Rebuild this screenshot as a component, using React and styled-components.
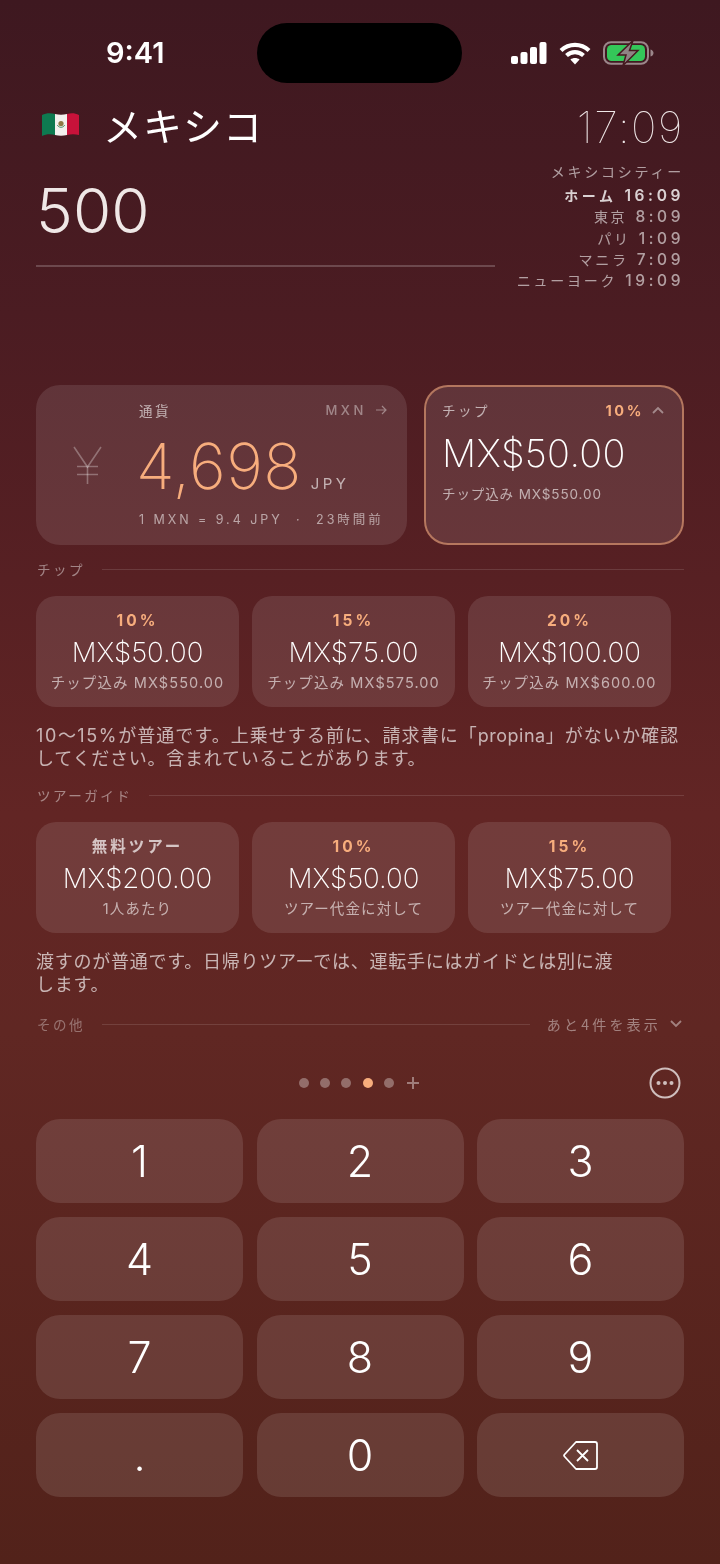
import styled, { createGlobalStyle } from "styled-components";

const GlobalStyle = createGlobalStyle`
  html {
    background: linear-gradient(180deg, #3e1820 0%, #4b1c22 20%, #572023 37%, #622524 52%, #602723 66%, #52221a 100%);
  }
  body {
    margin: 0;
    padding: 0;
  }
  * {
    box-sizing: border-box;
  }
`;

const FONT = `Inter, "Noto Sans CJK JP", sans-serif`;
const JP = `"Noto Sans CJK JP", Inter, sans-serif`;

const Screen = styled.div`
  width: 720px;
  height: 1564px;
  overflow: hidden;
  font-family: ${FONT};
  color: #fff;
  padding: 0 36px;
  will-change: opacity;
`;

const StatusBar = styled.div`
  height: 104px;
  margin: 0 -36px;
  padding: 23px 0 0 106px;
  display: flex;
  align-items: flex-start;
`;

const Clock = styled.div`
  font-size: 29px;
  font-weight: 600;
  line-height: 60px;
  width: 151px;
`;

const Island = styled.div`
  width: 205px;
  height: 60px;
  border-radius: 30px;
  background: #000;
`;

const StatusIcons = styled.div`
  height: 60px;
  margin-left: 49px;
  display: flex;
  align-items: center;
  gap: 12px;
`;

const Header = styled.div`
  display: flex;
  justify-content: space-between;
  height: 281px;
`;

const HeaderLeft = styled.div`
  width: 459px;
`;

const TitleRow = styled.div`
  display: flex;
  align-items: center;
  gap: 23px;
  height: 40px;
  padding-left: 5px;
`;

const Title = styled.h1`
  margin: 0;
  font-family: ${JP};
  font-size: 39px;
  font-weight: 400;
  line-height: 40px;
  letter-spacing: 1px;
`;

const Amount = styled.div`
  margin-top: 27px;
  height: 94px;
  font-size: 62px;
  font-weight: 280;
  line-height: 79px;
  letter-spacing: 0.1px;
  color: #efe7e6;
`;

const Rule = styled.div`
  height: 2px;
  background: rgba(255, 255, 255, 0.2);
`;

const HeaderRight = styled.div`
  text-align: right;
  padding-top: 3px;
`;

const BigTime = styled.div`
  font-size: 43px;
  font-weight: 100;
  line-height: 40px;
  color: #f0e8e8;
  letter-spacing: 1.6px;
`;

const Zones = styled.div`
  margin-top: 14px;
  font-family: ${JP};
  font-size: 14px;
  line-height: 21.2px;
  letter-spacing: 2.75px;
  color: rgba(255, 255, 255, 0.58);
`;

const Zone = styled.div`
  display: flex;
  justify-content: flex-end;
  gap: 8px;
  margin-top: ${(p) => (p.$home ? "3px" : "0")};
  font-weight: ${(p) => (p.$home ? 700 : 400)};
  letter-spacing: ${(p) => (p.$home ? "3.5px" : "inherit")};
  color: ${(p) => (p.$home ? "rgba(255,255,255,0.8)" : "inherit")};
`;

const ZoneTime = styled.span`
  font-family: ${FONT};
  font-size: 15.5px;
  font-weight: ${(p) => (p.$home ? 600 : 500)};
  letter-spacing: 3.6px;
`;

const Summary = styled.div`
  display: flex;
  gap: 17px;
`;

const Card = styled.div`
  height: 160px;
  border-radius: 24px;
  background: rgba(255, 255, 255, 0.105);
`;

const CurrencyCard = styled(Card)`
  width: 371px;
  display: flex;
  padding: 15px 20px 0 0;
`;

const YenMark = styled.div`
  width: 103px;
  flex: none;
  display: flex;
  justify-content: center;
  padding-top: 46px;
`;

const CurrencyBody = styled.div`
  flex: 1;
`;

const CardHead = styled.div`
  display: flex;
  justify-content: space-between;
  align-items: center;
  height: 20px;
`;

const CardLabel = styled.span`
  font-family: ${JP};
  font-size: 13.5px;
  letter-spacing: 2.5px;
  color: rgba(255, 255, 255, 0.62);
`;

const CardMeta = styled.span`
  display: flex;
  align-items: center;
  gap: 8px;
  font-size: ${(p) => (p.$strong ? "14.5px" : "13px")};
  font-weight: ${(p) => (p.$strong ? 700 : 500)};
  letter-spacing: ${(p) => (p.$strong ? "2.6px" : "3.6px")};
  color: ${(p) => (p.$strong ? "#f7ad7d" : "rgba(255,255,255,0.4)")};
`;

const ConvertedRow = styled.div`
  display: flex;
  align-items: baseline;
  margin: 14px 0 0 -3px;
  height: 64px;
`;

const Converted = styled.span`
  font-size: 63px;
  font-weight: 150;
  line-height: 64px;
  color: #f7ad7d;
  letter-spacing: 0.4px;
`;

const ConvertedUnit = styled.span`
  margin-left: 9px;
  font-size: 15px;
  font-weight: 400;
  letter-spacing: 3.4px;
  color: rgba(255, 255, 255, 0.62);
`;

const RateLine = styled.div`
  margin-top: 11px;
  font-size: 12.5px;
  letter-spacing: 2.95px;
  white-space: nowrap;
  color: rgba(255, 255, 255, 0.55);
`;

const RateDot = styled.span`
  margin: 0 7px;
`;

const TipCard = styled(Card)`
  width: 260px;
  padding: 13px 18px 0 16px;
  border: 2px solid rgba(247, 173, 125, 0.55);
  margin-right: -1px;
`;

const TipValue = styled.div`
  margin-top: 10px;
  font-size: 38px;
  font-weight: 250;
  line-height: 46px;
  color: #fff;
  letter-spacing: 0.3px;
`;

const TipTotal = styled.div`
  margin-top: 7px;
  font-size: 13.5px;
  letter-spacing: 0.9px;
  color: rgba(255, 255, 255, 0.6);
`;

const SectionRow = styled.div`
  display: flex;
  align-items: center;
  gap: 17px;
  height: 20px;
  margin-top: ${(p) => p.$top}px;
  padding: 0 ${(p) => (p.$more ? "2px" : "0")} 0 1px;
`;

const SectionName = styled.span`
  font-family: ${JP};
  font-size: 13.5px;
  letter-spacing: 2.5px;
  white-space: nowrap;
  color: rgba(255, 255, 255, ${(p) => (p.$dim ? 0.35 : 0.45)});
`;

const SectionLine = styled.div`
  flex: 1;
  height: 1px;
  background: rgba(255, 255, 255, 0.12);
`;

const MoreLink = styled.span`
  display: flex;
  align-items: center;
  gap: 9px;
  font-family: ${JP};
  font-size: 14px;
  letter-spacing: 3.2px;
  white-space: nowrap;
  color: rgba(255, 255, 255, 0.42);
`;

const ChipRow = styled.div`
  display: flex;
  gap: 13px;
  margin-top: 17px;
`;

const Chip = styled.div`
  width: 203px;
  height: 111px;
  border-radius: 20px;
  background: rgba(255, 255, 255, 0.105);
  display: flex;
  flex-direction: column;
  align-items: center;
  padding-top: 14px;
`;

const ChipHead = styled.div`
  height: 22px;
  line-height: 22px;
  font-size: 15.5px;
  font-weight: 700;
  letter-spacing: 3px;
  color: ${(p) => (p.$plain ? "rgba(255,255,255,0.7)" : "#f7ad7d")};
`;

const ChipValue = styled.div`
  margin-top: 2px;
  height: 36px;
  line-height: 36px;
  font-size: 27.6px;
  font-weight: 250;
  color: #fff;
`;

const ChipNote = styled.div`
  margin-top: 3px;
  font-size: 14.5px;
  line-height: 20px;
  letter-spacing: 1.1px;
  white-space: nowrap;
  color: rgba(255, 255, 255, 0.6);
`;

const Note = styled.div`
  margin-top: 17px;
  font-size: 18px;
  line-height: 23px;
  letter-spacing: 0.75px;
  color: rgba(255, 255, 255, 0.66);
`;

const NoteLine = styled.div`
  white-space: nowrap;
  letter-spacing: ${(p) => (p.$spread ? "1.05px" : "inherit")};
`;

const Digits = styled.span`
  letter-spacing: 1.7px;
`;

const Latin = styled.span`
  letter-spacing: 0.5px;
`;

const PagerRow = styled.div`
  position: relative;
  height: 40px;
  margin-top: 29px;
  padding-right: 2px;
  display: flex;
  justify-content: center;
  align-items: center;
  gap: 11.4px;
`;

const Dot = styled.span`
  width: 10px;
  height: 10px;
  border-radius: 50%;
  background: ${(p) => (p.$active ? "#f7ad7d" : "rgba(255,255,255,0.33)")};
`;

const PlusMark = styled.span`
  margin-left: 2px;
  line-height: 0;
`;

const MoreButton = styled.div`
  position: absolute;
  right: 3px;
  top: 4px;
  line-height: 0;
`;

const Keypad = styled.div`
  display: grid;
  grid-template-columns: repeat(3, 207px);
  grid-auto-rows: 84px;
  column-gap: 13.5px;
  row-gap: 14px;
  margin-top: 16px;
`;

const Key = styled.div`
  border-radius: 24px;
  background: rgba(255, 255, 255, 0.115);
  display: flex;
  align-items: center;
  justify-content: center;
  font-size: 43px;
  font-weight: 280;
  color: #fff;
`;

const chipsTip = [
  { head: "10%", value: "MX$50.00", note: "チップ込み MX$550.00" },
  { head: "15%", value: "MX$75.00", note: "チップ込み MX$575.00" },
  { head: "20%", value: "MX$100.00", note: "チップ込み MX$600.00" },
];

const chipsGuide = [
  { head: "無料ツアー", plain: true, value: "MX$200.00", note: "1人あたり" },
  { head: "10%", value: "MX$50.00", note: "ツアー代金に対して" },
  { head: "15%", value: "MX$75.00", note: "ツアー代金に対して" },
];

const zones = [
  { label: "ホーム", time: "16:09", home: true },
  { label: "東京", time: "8:09" },
  { label: "パリ", time: "1:09" },
  { label: "マニラ", time: "7:09" },
  { label: "ニューヨーク", time: "19:09" },
];

const FlagIcon = () => (
  <svg width="39" height="28" viewBox="0 0 39 28">
    <path d="M1 5c4-2 9-2 13-1v21c-4-1-9-1-13 1z" fill="#0d7a50" />
    <path d="M14 4c4 1 8 1 12 0v21c-4 1-8 1-12 0z" fill="#f3f1ee" />
    <path d="M26 4c4-1 8-1 12 1v20c-4-1-8-1-12 0z" fill="#c8123a" />
    <circle cx="20" cy="13.5" r="2.6" fill="#8d7a45" />
    <path d="M16.5 15c.5 3 6.5 3 7 0" fill="none" stroke="#4d8f68" strokeWidth="1" />
  </svg>
);

const SignalIcon = () => (
  <svg width="36" height="22" viewBox="0 0 36 22" fill="#fff">
    <rect x="0" y="14" width="7" height="8" rx="2" />
    <rect x="9.5" y="10" width="7" height="12" rx="2" />
    <rect x="19" y="5" width="7" height="17" rx="2" />
    <rect x="28.5" y="0" width="7" height="22" rx="2" />
  </svg>
);

const WifiIcon = () => (
  <svg width="32" height="23" viewBox="0 0 32 23" fill="none" stroke="#fff" strokeWidth="4.2">
    <path d="M2 8.5c8-7.5 20-7.5 28 0" />
    <path d="M7.5 13.5c5-4.5 12-4.5 17 0" />
    <path d="M16 22.5l-4.6-5c2.6-2 6.6-2 9.2 0z" fill="#fff" stroke="none" />
  </svg>
);

const BatteryIcon = () => (
  <svg width="51" height="26" viewBox="0 0 51 26">
    <rect x="1" y="2.2" width="44" height="21.6" rx="7" fill="none" stroke="rgba(255,255,255,0.48)" strokeWidth="2" />
    <rect x="4" y="5" width="38" height="16" rx="4.5" fill="#34c759" />
    <path d="M47.5 9.5c2 .5 3 2 3 3.5s-1 3-3 3.5z" fill="rgba(255,255,255,0.48)" />
    <path d="M30 .5L15 15h8l-3 10.5L35 10.5h-8.5z" fill="#8f8384" stroke="#45191f" strokeWidth="1.5" />
  </svg>
);

const YenIcon = () => (
  <svg width="29" height="38" viewBox="0 0 29 38" fill="none" stroke="rgba(255,255,255,0.3)" strokeWidth="1.6">
    <path d="M1 1l13.5 20L28 1" />
    <path d="M14.5 21v17" />
    <path d="M4 20.5h21M4 28.5h21" />
  </svg>
);

const ArrowIcon = () => (
  <svg width="12" height="10" viewBox="0 0 12 10" fill="none" stroke="rgba(255,255,255,0.4)" strokeWidth="1.2">
    <path d="M1 5h10M7 1l4 4-4 4" />
  </svg>
);

const ChevronIcon = ({ up }) => (
  <svg width="12" height="8" viewBox="0 0 12 8" fill="none" stroke="rgba(255,255,255,0.42)" strokeWidth="1.8">
    <path d={up ? "M1 7l5-5 5 5" : "M1 1l5 5 5-5"} />
  </svg>
);

const PlusIcon = () => (
  <svg width="12" height="12" viewBox="0 0 12 12" stroke="rgba(255,255,255,0.4)" strokeWidth="2">
    <path d="M6 0v12M0 6h12" />
  </svg>
);

const EllipsisIcon = () => (
  <svg width="32" height="32" viewBox="0 0 32 32" fill="rgba(255,255,255,0.7)">
    <circle cx="16" cy="16" r="14.5" fill="none" stroke="rgba(255,255,255,0.7)" strokeWidth="2" />
    <circle cx="9.5" cy="16" r="2" />
    <circle cx="16" cy="16" r="2" />
    <circle cx="22.5" cy="16" r="2" />
  </svg>
);

const BackspaceIcon = () => (
  <svg width="35" height="29" viewBox="0 0 35 29" fill="none" stroke="#fff" strokeWidth="1.8">
    <path d="M13 1h19a2 2 0 0 1 2 2v23a2 2 0 0 1-2 2H13L1.5 15.5a1.5 1.5 0 0 1 0-2z" strokeLinejoin="round" />
    <path d="M14 9l11 11M25 9L14 20" />
  </svg>
);

const ChipList = ({ items }) => (
  <ChipRow>
    {items.map((item) => (
      <Chip key={item.value}>
        <ChipHead $plain={item.plain}>{item.head}</ChipHead>
        <ChipValue>{item.value}</ChipValue>
        <ChipNote>{item.note}</ChipNote>
      </Chip>
    ))}
  </ChipRow>
);

const App = () => {
  return (
    <Screen>
      <GlobalStyle />
      <StatusBar>
        <Clock>9:41</Clock>
        <Island />
        <StatusIcons>
          <SignalIcon />
          <WifiIcon />
          <BatteryIcon />
        </StatusIcons>
      </StatusBar>

      <Header>
        <HeaderLeft>
          <TitleRow>
            <FlagIcon />
            <Title>メキシコ</Title>
          </TitleRow>
          <Amount>500</Amount>
          <Rule />
        </HeaderLeft>
        <HeaderRight>
          <BigTime>17:09</BigTime>
          <Zones>
            <Zone>メキシコシティー</Zone>
            {zones.map((z) => (
              <Zone key={z.label} $home={z.home}>
                <span>{z.label}</span>
                <ZoneTime $home={z.home}>{z.time}</ZoneTime>
              </Zone>
            ))}
          </Zones>
        </HeaderRight>
      </Header>

      <Summary>
        <CurrencyCard>
          <YenMark>
            <YenIcon />
          </YenMark>
          <CurrencyBody>
            <CardHead>
              <CardLabel>通貨</CardLabel>
              <CardMeta>
                MXN <ArrowIcon />
              </CardMeta>
            </CardHead>
            <ConvertedRow>
              <Converted>4,698</Converted>
              <ConvertedUnit>JPY</ConvertedUnit>
            </ConvertedRow>
            <RateLine>
              1 MXN = 9.4 JPY <RateDot>·</RateDot> 23時間前
            </RateLine>
          </CurrencyBody>
        </CurrencyCard>
        <TipCard>
          <CardHead>
            <CardLabel>チップ</CardLabel>
            <CardMeta $strong>
              10% <ChevronIcon up />
            </CardMeta>
          </CardHead>
          <TipValue>MX$50.00</TipValue>
          <TipTotal>チップ込み MX$550.00</TipTotal>
        </TipCard>
      </Summary>

      <SectionRow $top={14}>
        <SectionName>チップ</SectionName>
        <SectionLine />
      </SectionRow>
      <ChipList items={chipsTip} />
      <Note>
        <NoteLine $spread>
          <Digits>10</Digits>〜<Digits>15%</Digits>が普通です。上乗せする前に、請求書に「<Latin>propina</Latin>」がないか確認
        </NoteLine>
        <NoteLine>してください。含まれていることがあります。</NoteLine>
      </Note>

      <SectionRow $top={15}>
        <SectionName>ツアーガイド</SectionName>
        <SectionLine />
      </SectionRow>
      <ChipList items={chipsGuide} />
      <Note>
        <NoteLine>渡すのが普通です。日帰りツアーでは、運転手にはガイドとは別に渡</NoteLine>
        <NoteLine>します。</NoteLine>
      </Note>

      <SectionRow $top={18} $more>
        <SectionName $dim>その他</SectionName>
        <SectionLine />
        <MoreLink>
          あと4件を表示 <ChevronIcon />
        </MoreLink>
      </SectionRow>

      <PagerRow>
        <Dot />
        <Dot />
        <Dot />
        <Dot $active />
        <Dot />
        <PlusMark>
          <PlusIcon />
        </PlusMark>
        <MoreButton>
          <EllipsisIcon />
        </MoreButton>
      </PagerRow>

      <Keypad>
        {["1", "2", "3", "4", "5", "6", "7", "8", "9", ".", "0"].map((k) => (
          <Key key={k}>{k}</Key>
        ))}
        <Key>
          <BackspaceIcon />
        </Key>
      </Keypad>
    </Screen>
  );
};

export default App;
